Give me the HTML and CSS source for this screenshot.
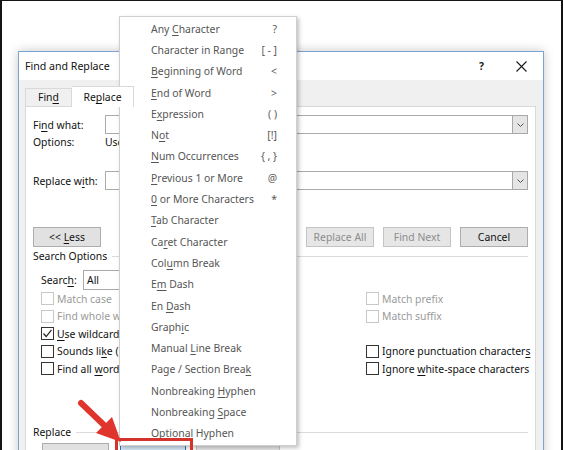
FILE: index.html
```html
<!DOCTYPE html>
<html>
<head>
<meta charset="utf-8">
<link rel="stylesheet" href="styles.css">
</head>
<body>
<div class="desktop">
  <div class="dialog">
    <div class="titlebar">
      <span class="title">Find and Replace</span>
      <span class="help">?</span>
      <svg class="close" width="11" height="11" viewBox="0 0 11 11"><path d="M0.5 0.5 L10.5 10.5 M10.5 0.5 L0.5 10.5" stroke="#1a1a1a" stroke-width="1.1" fill="none"/></svg>
    </div>
    <div class="dlg-body">
      <div class="tabs">
        <div class="tab">Fin<u>d</u></div>
        <div class="tab active">Re<u>p</u>lace</div>
        <div class="tab">Go To</div>
      </div>
      <div class="panel">
        <div class="field-row first">
          <span class="lbl">Fi<u>n</u>d what:</span>
          <div class="combo"><span class="combo-btn"><svg width="7" height="4" viewBox="0 0 7 4"><path d="M0.5 0.5 L3.5 3.5 L6.5 0.5" stroke="#555" fill="none"/></svg></span></div>
        </div>
        <div class="opt-row"><span class="lbl">Options:</span><span>Use Wildcards</span></div>
        <div class="field-row second">
          <span class="lbl">Replace w<u>i</u>th:</span>
          <div class="combo"><span class="combo-btn"><svg width="7" height="4" viewBox="0 0 7 4"><path d="M0.5 0.5 L3.5 3.5 L6.5 0.5" stroke="#555" fill="none"/></svg></span></div>
        </div>
        <div class="btn-row">
          <span class="btn less"><span>&lt;&lt; <u>L</u>ess</span></span>
          <div class="btn-group">
            <span class="btn"><span>Replace</span></span>
            <span class="btn disabled"><span>Replace All</span></span>
            <span class="btn disabled"><span>Find Next</span></span>
            <span class="btn"><span>Cancel</span></span>
          </div>
        </div>
        <div class="group-head search-head"><span>Search Options</span></div>
        <div class="search-row">
          <span class="slbl">Searc<u>h</u>:</span>
          <div class="select">All</div>
        </div>
        <div class="checks">
          <div class="chk disabled"><span class="box"></span><span>Match case</span></div>
          <div class="chk disabled"><span class="box"></span><span>Match prefix</span></div>
          <div class="chk disabled"><span class="box"></span><span>Find whole words only</span></div>
          <div class="chk disabled"><span class="box"></span><span>Match suffix</span></div>
          <div class="chk"><span class="box"><svg width="11" height="11" viewBox="0 0 11 11"><path d="M1.5 5.5 L4.2 8.5 L9.5 1.8" stroke="#222" stroke-width="1.2" fill="none"/></svg></span><span><u>U</u>se wildcards</span></div>
          <div class="chk empty"></div>
          <div class="chk"><span class="box"></span><span>Sounds li<u>k</u>e (English)</span></div>
          <div class="chk"><span class="box"></span><span>Ignore punctuation character<u>s</u></span></div>
          <div class="chk"><span class="box"></span><span>Find all <u>w</u>ord forms (English)</span></div>
          <div class="chk"><span class="box"></span><span>Ignore <u>w</u>hite-space characters</span></div>
        </div>
        <div class="group-head replace-head"><span>Replace</span></div>
        <div class="bottom-btns">
          <span class="btn b1"><span>F<u>o</u>rmat</span></span>
          <span class="btn b2 pressed"><span>Sp<u>e</u>cial</span></span>
          <span class="btn b3 disabled"><span>No Formatting</span></span>
        </div>
      </div>
    </div>
  </div>

  <div class="menu">
    <div class="item"><span>Any <u>C</u>haracter</span><span class="key">?</span></div>
    <div class="item"><span>Character in Range</span><span class="key">[ - ]</span></div>
    <div class="item"><span><u>B</u>eginning of Word</span><span class="key">&lt;</span></div>
    <div class="item"><span><u>E</u>nd of Word</span><span class="key">&gt;</span></div>
    <div class="item"><span>E<u>x</u>pression</span><span class="key">( )</span></div>
    <div class="item"><span>N<u>o</u>t</span><span class="key">[!]</span></div>
    <div class="item"><span><u>N</u>um Occurrences</span><span class="key">{ , }</span></div>
    <div class="item"><span><u>P</u>revious 1 or More</span><span class="key">@</span></div>
    <div class="item"><span><u>0</u> or More Characters</span><span class="key">*</span></div>
    <div class="item"><span><u>T</u>ab Character</span></div>
    <div class="item"><span>Ca<u>r</u>et Character</span></div>
    <div class="item"><span>Col<u>u</u>mn Break</span></div>
    <div class="item"><span>E<u>m</u> Dash</span></div>
    <div class="item"><span>En <u>D</u>ash</span></div>
    <div class="item"><span>Graph<u>i</u>c</span></div>
    <div class="item"><span>Manual <u>L</u>ine Break</span></div>
    <div class="item"><span>Page / Section Brea<u>k</u></span></div>
    <div class="item"><span>Nonbreaking <u>H</u>yphen</span></div>
    <div class="item"><span>Nonbreaking <u>S</u>pace</span></div>
    <div class="item"><span>Optional Hyphen</span></div>
  </div>

  <div class="highlight"></div>
  <svg class="arrow" width="563" height="450" viewBox="0 0 563 450">
    <line x1="81" y1="403" x2="106" y2="427" stroke="#e0352d" stroke-width="6" stroke-linecap="round"/>
    <polygon points="121,442 112,417 96,433" fill="#e0352d"/>
  </svg>
</div>
</body>
</html>
```

FILE: styles.css
```css
* { box-sizing: border-box; }
body { margin: 0; }
u { text-decoration-thickness: 1px; text-underline-offset: 1.5px; }

.desktop {
  position: relative;
  width: 563px;
  height: 450px;
  overflow: hidden;
  background: #fff;
  box-shadow: inset 2px 0 0 #141414, inset -2px 0 0 #141414, inset 0 1px 0 #141414;
  font-family: "Noto Sans", sans-serif;
  font-size: 10.4px;
  color: #111;
}

/* dialog window */
.dialog {
  position: absolute;
  left: 18px;
  top: 51px;
  width: 526px;
  height: 430px;
  border: 1px solid #7ea3d1;
  background: #f0f0f0;
  box-shadow: 0 0 10px rgba(0, 0, 0, 0.22);
}
.titlebar {
  height: 28px;
  background: #fff;
  display: flex;
  align-items: center;
  padding-left: 6px;
}
.title { font-size: 10.6px; }
.help { margin-left: auto; font-weight: bold; font-size: 10.4px; color: #222; }
.close { margin-left: 32px; margin-right: 16px; }

.dlg-body { padding: 6px 7px 0 6px; }
.tabs { display: flex; height: 20px; align-items: flex-end; }
.tab {
  height: 18px;
  line-height: 17px;
  border: 1px solid #d9d9d9;
  border-bottom: none;
  background: #f0f0f0;
  width: 47px;
  text-align: center;
}
.tab.active {
  height: 21px;
  line-height: 20px;
  margin-bottom: -1px;
  background: #fff;
  border-left: none;
  width: 62px;
  position: relative;
  z-index: 1;
}

.panel {
  border: 1px solid #d9d9d9;
  background: #fff;
  padding: 0 7px;
  height: 360px;
}
.field-row { display: flex; align-items: center; height: 19px; }
.field-row.first { margin-top: 8px; }
.field-row.second { margin-top: 22px; }
.lbl { width: 72px; flex: none; }
.combo {
  flex: 1;
  height: 19px;
  border: 1px solid #ababab;
  display: flex;
  justify-content: flex-end;
}
.combo-btn {
  width: 16px;
  height: 19px;
  margin: -1px -1px -1px 0;
  border: 1px solid #a8a8a8;
  background: #e5e5e5;
  display: flex;
  align-items: center;
  justify-content: center;
}
.opt-row { display: flex; height: 14px; line-height: 14px; margin-top: 1px; }

.btn {
  display: flex;
  align-items: center;
  justify-content: center;
  height: 20px;
  background: #e1e1e1;
  border: 1px solid #adadad;
  color: #111;
  white-space: nowrap;
}
.btn.disabled { color: #8c8c8c; background: #e6e6e6; border-color: #c4c4c4; }
.btn-row { display: flex; margin-top: 37px; }
.btn.less { width: 68px; }
.btn-group { margin-left: auto; display: flex; gap: 9px; }
.btn-group .btn { width: 68px; }

.group-head {
  display: flex;
  align-items: center;
  height: 14px;
  white-space: nowrap;
}
.group-head::after {
  content: "";
  flex: 1;
  height: 1px;
  background: #dcdcdc;
  margin-left: 5px;
}
.search-head { margin-top: 2px; }
.replace-head { margin-top: 47.5px; }

.search-row {
  display: flex;
  align-items: center;
  height: 20px;
  margin-top: 7px;
  padding-left: 8px;
}
.slbl { width: 42px; }
.select {
  width: 200px;
  height: 20px;
  border: 1px solid #a9a9a9;
  padding-left: 3px;
  line-height: 18px;
}

.checks {
  display: grid;
  grid-template-columns: 325px 1fr;
  grid-auto-rows: 17.5px;
  padding-left: 8px;
}
.chk { display: flex; align-items: center; white-space: nowrap; }
.chk .box {
  width: 13px;
  height: 13px;
  border: 1px solid #333;
  background: #fff;
  margin-right: 3px;
  display: flex;
  align-items: center;
  justify-content: center;
  flex: none;
}
.chk.disabled { color: #9a9a9a; }
.chk.disabled .box { border-color: #c8c8c8; }

.bottom-btns { display: flex; margin-top: 4px; padding-left: 9px; }
.bottom-btns .btn { height: 26px; }
.btn.b1 { width: 67px; }
.btn.b2 { width: 66px; margin-left: 11px; }
.btn.b3 { width: 84px; margin-left: 10px; }
.btn.pressed { background: #d6e8f8; border-color: #2f73b0; }

/* Special popup menu */
.menu {
  position: absolute;
  left: 119px;
  top: 16px;
  width: 178px;
  border: 1px solid #cfcfcf;
  background: #fff;
  padding: 1px 19px 1px 31px;
  box-shadow: 2px 2px 4px rgba(0, 0, 0, 0.25);
  color: #555;
}
.item {
  height: 21.3px;
  display: flex;
  align-items: center;
  justify-content: space-between;
  white-space: nowrap;
}
.key { color: #5a5a5a; }

/* annotations */
.highlight {
  position: absolute;
  left: 115px;
  top: 438px;
  width: 78px;
  height: 24px;
  border: 3px solid #d4332c;
}
.arrow { position: absolute; left: 0; top: 0; pointer-events: none; }
```
